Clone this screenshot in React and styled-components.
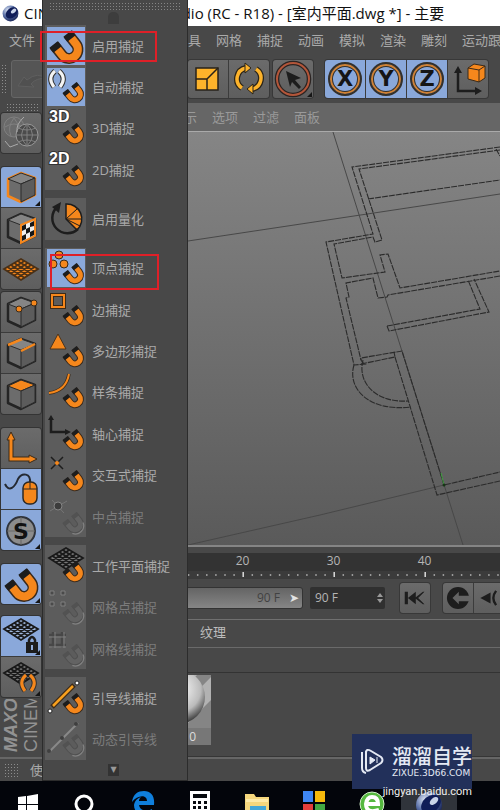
import React from "react";
import styled, { createGlobalStyle } from "styled-components";

const ORANGE = "#f5871c";
const INK = "#1d1d1d";

/* ---------- icons ---------- */

const Magnet = ({ small, off }) => (
  <g transform={small ? "translate(14 12) scale(.63)" : undefined} fill="none" opacity={off ? 0.6 : 1}>
    <path d="M7 18L15 28A8.9 8.9 0 0 0 29 17L21 7" stroke={off ? "#484848" : "#3a2a1c"} strokeWidth="11" />
    <path d="M8 19L15 28A8.9 8.9 0 0 0 29 17L22 8" stroke={off ? "#686868" : ORANGE} strokeWidth="8" />
    <path d="M6.500 17.500L10.500 22.500M20.500 6.500L24.500 11.500" stroke={off ? "#4c4c4c" : INK} strokeWidth="10.500" />
    {off && <path d="M18 37A13 13 0 0 0 35 20" stroke="#9a9a9a" strokeWidth="2" />}
  </g>
);

const Grid = ({ x = 3, y = 0, color = "#191919", fill = "#777" }) => (
  <g transform={`translate(${x} ${y})`} stroke={color} strokeWidth="1.800" fill={fill}>
    <path d="M0 11L17 1L34 11L17 22Z" />
    <path
      fill="none"
      d="M3.400 9L20.400 19.800M6.800 7L23.800 17.600M10.200 5L27.200 15.400M13.600 3L30.600 13.200M3.400 13.200L20.400 3M6.800 15.400L23.800 5M10.200 17.600L27.200 7M13.600 19.800L30.600 9"
    />
  </g>
);

const Cube = ({ edge = "#242424", top = "#858585", children }) => (
  <>
    <path d="M6 11L19 5L33 10V27L19 34L6 28Z" fill="#6c6c6c" stroke={edge} strokeWidth="2.500" strokeLinejoin="round" />
    <path d="M6 11L19 5L33 10L19 16Z" fill={top} stroke="#2b2b2b" />
    <path d="M19 16L33 10V27L19 34Z" fill="#5c5c5c" stroke="#2b2b2b" />
    {children}
  </>
);

const Brackets = ({ x = 0, y = 0, color = "#f4f4f4" }) => (
  <g transform={`translate(${x} ${y})`} fill="none">
    <path d="M8 2Q0 9 7 18M12 2Q20 9 13 18" stroke="#333" strokeWidth="5" />
    <path d="M8 2Q0 9 7 18M12 2Q20 9 13 18" stroke={color} strokeWidth="3" />
  </g>
);

const ModeText = ({ children }) => (
  <text x="2" y="13" fontSize="16" fontWeight="700" fill="#fff" stroke="#333" strokeWidth="2" paintOrder="stroke" fontFamily="Liberation Sans, Arial, sans-serif">
    {children}
  </text>
);

const glyphs = {
  enable: <Magnet />,
  auto: <><Brackets y={1} /><Magnet small /></>,
  three: <><ModeText>3D</ModeText><Magnet small /></>,
  two: <><ModeText>2D</ModeText><Magnet small /></>,
  quantize: (
    <>
      <path d="M19 19V4A15 15 0 0 1 30 30Z" fill={ORANGE} stroke={INK} strokeWidth="1.500" />
      <path d="M19 19L30 9M19 19H34M19 19L33 26" stroke={INK} />
      <path d="M10 7A15 15 0 1 0 31 29" fill="none" stroke={INK} strokeWidth="2.500" />
      <path d="M5 7L14 2L12 13Z" fill={INK} />
    </>
  ),
  vertex: (
    <>
      <g fill={ORANGE} stroke="#3b2a18">
        <circle cx="12" cy="6" r="4" /><circle cx="6" cy="15" r="4" /><circle cx="17" cy="15" r="4" />
      </g>
      <Magnet small />
    </>
  ),
  edge: (
    <>
      <path d="M5 4H17V16H5Z" fill="none" stroke="#3b2a18" strokeWidth="4" />
      <path d="M5 4H17V16H5Z" fill="none" stroke={ORANGE} strokeWidth="2" />
      <Magnet small />
    </>
  ),
  polygon: <><path d="M11 2L19 17H3Z" fill={ORANGE} stroke="#4b341d" /><Magnet small /></>,
  spline: (
    <>
      <path d="M2 20Q19 18 22 1" fill="none" stroke="#3b2a18" strokeWidth="3.500" />
      <path d="M2 20Q19 18 22 1" fill="none" stroke={ORANGE} strokeWidth="2" />
      <Magnet small />
    </>
  ),
  axis: <><path d="M4 4V17H20" fill="none" stroke={INK} strokeWidth="2.500" /><path d="M1 5L4 0L7 5ZM18 14L24 17L18 20Z" fill={INK} /><Magnet small /></>,
  cross: <><path d="M4 1L16 13M16 1L4 13" stroke={INK} strokeWidth="1.500" /><circle cx="10" cy="7" r="2" fill={ORANGE} /><Magnet small /></>,
  middle: (
    <>
      <path d="M3 13L20 3M5 2L17 15" stroke="#757575" />
      <circle cx="11" cy="8" r="4" fill="#3c3c3c" stroke="#858585" />
      <Magnet small off />
    </>
  ),
  plane: <><Grid x={2} y={0} /><Magnet small /></>,
  gridPoint: (
    <>
      <path d="M3 3h4v4H3zM14 3h4v4h-4zM3 14h4v4H3zM14 14h4v4h-4z" fill="#4a4a4a" stroke="#7e7e7e" />
      <Magnet small off />
    </>
  ),
  gridLine: (
    <>
      <path d="M6 2V18M15 2V18M2 5H19M2 15H19" stroke="#474747" strokeWidth="2.500" />
      <path d="M8 2V18M17 2V18M2 7H19M2 17H19" stroke="#7e7e7e" />
      <Magnet small off />
    </>
  ),
  guide: (
    <>
      <path d="M5 28L27 6" stroke="#3b2a18" strokeWidth="5" />
      <path d="M6 27L26 7" stroke="#f7a01f" strokeWidth="2.500" />
      <g fill="#fff" stroke="#222"><circle cx="3" cy="32" r="2" /><circle cx="30" cy="4" r="2" /></g>
      <Magnet small />
    </>
  ),
  dynamic: (
    <>
      <path d="M2 32L31 3" stroke="#898989" strokeWidth="2" />
      <g fill="#3f3f3f"><circle cx="2" cy="31" r="2" /><circle cx="15" cy="18" r="2" /><circle cx="29" cy="4" r="2" /></g>
      <Magnet small off />
    </>
  ),
  globe: (
    <g fill="none" stroke="#808080">
      <circle cx="12" cy="13" r="10" fill="#6a6a6a" />
      <path d="M3 13Q12 7 21 13M12 4Q5 13 9 22M12 4Q19 13 16 22" />
      <circle cx="25" cy="21" r="11" fill="#4b4b4b" stroke="#999" />
      <path d="M14 21H36M16 14Q25 18 34 14M16 28Q25 24 34 28M25 10V32M25 10Q14 21 25 32M25 10Q36 21 25 32" />
      <path d="M3 27L8 33L16 30M22 3Q14 10 15 18" stroke="#aaa" />
    </g>
  ),
  model: <Cube edge={ORANGE} />,
  texture: (
    <Cube>
      <path d="M19 16L33 10V27L19 34Z" fill="#eee" stroke={ORANGE} strokeWidth="2" />
      <path d="M20 17l4-2v5l-4 2zM28 14l4-2v5l-4 1zM24 20l4-2v5l-4 2zM20 27l4-2v5l-4 2zM28 23l4-2v5l-4 2z" fill="#151515" />
    </Cube>
  ),
  workplane: <Grid x={2} y={8} color="#4a3016" fill={ORANGE} />,
  points: <Cube><g fill={ORANGE} stroke="#3b2a18"><circle cx="17" cy="16" r="3" /><circle cx="32" cy="10" r="3" /></g></Cube>,
  edges: <Cube><path d="M6 11L20 5M19 17L33 10" stroke={ORANGE} strokeWidth="2.500" /></Cube>,
  polys: <Cube top={ORANGE} />,
  axisMode: (
    <>
      <path d="M9 8V30H29" fill="none" stroke="#3b2a18" strokeWidth="5" />
      <path d="M5 11L9 3L13 11ZM27 26L35 30L27 34Z" fill={ORANGE} stroke="#3b2a18" />
      <path d="M9 8V30H29" fill="none" stroke={ORANGE} strokeWidth="3" />
    </>
  ),
  mouse: (
    <>
      <path d="M3 14C7 23 13 17 16 9C20 2 29 3 28 13" fill="none" stroke="#252a33" strokeWidth="2" />
      <rect x="21" y="12" width="14" height="22" rx="6" fill={ORANGE} stroke="#2c2925" strokeWidth="1.500" />
      <path d="M21 19H35M28 12V19" stroke="#2c2925" />
    </>
  ),
  solo: (
    <>
      <circle cx="19" cy="20" r="14" fill="#8c8c8c" stroke="#30343b" strokeWidth="2" />
      <path d="M5 20H33M19 6V34" stroke="#666" />
      <text x="19" y="28" textAnchor="middle" fontSize="22" fontWeight="700" fontFamily="DejaVu Sans, sans-serif" fill="#111">S</text>
    </>
  ),
  lock: (
    <>
      <Grid x={2} y={1} fill="#9db4d9" />
      <path d="M27 26V23Q30 17 33 23V26" fill="none" stroke={INK} strokeWidth="2.500" />
      <rect x="24" y="25" width="12" height="11" fill={INK} />
      <path d="M30 28V33" stroke="#93aedc" strokeWidth="2" />
    </>
  ),
  gridAuto: <><Grid x={2} y={4} /><Brackets x={16} y={15} color={ORANGE} /></>,
  scale: (
    <>
      <path d="M7 8H29V30H7Z" fill="#fdb32b" stroke="#27221a" strokeWidth="1.500" />
      <path d="M7 19H18V30M18 19L29 8" fill="none" stroke="#27221a" strokeWidth="1.500" />
    </>
  ),
  rotate: (
    <g fill="none">
      <path d="M12 28A11 11 0 0 1 16 8M26 9A11 11 0 0 1 22 29" stroke="#2b2418" strokeWidth="6" />
      <path d="M12 28A11 11 0 0 1 16 8M26 9A11 11 0 0 1 22 29" stroke="#fdb32b" strokeWidth="3.500" />
      <path d="M15 3L21 8L15 13ZM23 24L17 29L23 34Z" fill="#fdb32b" stroke="#2b2418" />
    </g>
  ),
  select: (
    <>
      <circle cx="19" cy="19" r="16" fill="none" stroke="#2c2422" strokeWidth="4.500" />
      <circle cx="19" cy="19" r="16" fill="none" stroke="#b3563a" strokeWidth="2" />
      <path d="M12 11L27 18L21 20L27 27L25 29L18 22L16 27Z" fill={INK} />
    </>
  ),
  coord: (
    <>
      <path d="M9 12V31H27" fill="none" stroke={INK} strokeWidth="2.500" />
      <path d="M5 13L9 6L13 13ZM26 27L33 31L26 35Z" fill={INK} />
      <path d="M19 8L25 4L36 6V18L30 22L19 19Z" fill={ORANGE} stroke="#3b2a18" />
      <path d="M19 8L30 10V22M30 10L36 6" fill="none" stroke="#3b2a18" />
    </>
  ),
  undo: <path d="M6 25L12 16L15 19Q26 10 34 18Q25 16 19 23L22 26Z" fill="#505050" stroke="#5f5f5f" />,
  toStart: <path d="M6 11H10V27H6ZM10 19L20 11V18L29 11H31L23 19L31 27H29L20 20V27Z" fill={INK} />,
  record: (
    <>
      <circle cx="19" cy="19" r="14" fill={INK} />
      <path d="M12 19L20 11V16H35V23H20V27Z" fill="#646464" />
    </>
  ),
  back: <><path d="M8 19L21 12V26Z" fill={INK} /><path d="M28 10Q21 19 28 28" fill="none" stroke={INK} strokeWidth="3" /></>,
};

const Glyph = ({ name, size = 38 }) => (
  <svg width={size} height={size} viewBox="0 0 38 38" aria-hidden="true">
    {glyphs[name]}
  </svg>
);

const CinemaLogo = ({ size }) => (
  <svg width={size} height={size} viewBox="0 0 28 28" aria-hidden="true">
    <defs>
      <radialGradient id="ball" cx=".35" cy=".3" r=".8">
        <stop offset="0" stopColor="#dfe7f5" />
        <stop offset=".5" stopColor="#5a70a8" />
        <stop offset="1" stopColor="#0c1748" />
      </radialGradient>
    </defs>
    <circle cx="14" cy="14" r="13" fill="url(#ball)" />
    <ellipse cx="16" cy="13" rx="11" ry="8" transform="rotate(-40 16 13)" fill="#101d58" />
    <ellipse cx="19" cy="10" rx="5" ry="3" transform="rotate(-40 19 10)" fill="#c9d4ea" />
  </svg>
);

/* ---------- data ---------- */

const menus = ["工具", "网格", "捕捉", "动画", "模拟", "渲染", "雕刻", "运动跟踪"];
const tabs = ["显示", "选项", "过滤", "面板"];

const snapGroups = [
  [
    { icon: "enable", label: "启用捕捉", active: true },
    { icon: "auto", label: "自动捕捉", active: true },
    { icon: "three", label: "3D捕捉" },
    { icon: "two", label: "2D捕捉" },
  ],
  [{ icon: "quantize", label: "启用量化" }],
  [
    { icon: "vertex", label: "顶点捕捉", active: true },
    { icon: "edge", label: "边捕捉" },
    { icon: "polygon", label: "多边形捕捉" },
    { icon: "spline", label: "样条捕捉" },
    { icon: "axis", label: "轴心捕捉" },
    { icon: "cross", label: "交互式捕捉" },
    { icon: "middle", label: "中点捕捉", disabled: true },
  ],
  [
    { icon: "plane", label: "工作平面捕捉" },
    { icon: "gridPoint", label: "网格点捕捉", disabled: true },
    { icon: "gridLine", label: "网格线捕捉", disabled: true },
  ],
  [
    { icon: "guide", label: "引导线捕捉" },
    { icon: "dynamic", label: "动态引导线", disabled: true },
  ],
];

const railGroups = [
  { gap: 14, items: [{ icon: "globe" }] },
  { gap: 3, items: [{ icon: "model", active: true, more: true }, { icon: "texture" }, { icon: "workplane" }] },
  { gap: 14, items: [{ icon: "points" }, { icon: "edges" }, { icon: "polys" }] },
  { gap: 14, items: [{ icon: "axisMode" }, { icon: "mouse", active: true }, { icon: "solo", active: true, more: true }] },
  { gap: 12, items: [{ icon: "enable", active: true, more: true }] },
  { gap: 0, items: [{ icon: "lock", active: true, more: true }, { icon: "gridAuto", more: true }] },
];

/* ---------- app ---------- */

const App = () => {
  return (
    <Screen>
      <GlobalStyle />
      <TitleBar>
        <CinemaLogo size={17} />
        <TitleText>CINEMA 4D R18.02 Studio (RC - R18) - [室内平面.dwg *] - 主要</TitleText>
      </TitleBar>

      <MenuBar>
        <MenuButton>文件</MenuButton>
        <MenuList>
          {menus.map((m) => (
            <MenuButton key={m}>{m}</MenuButton>
          ))}
        </MenuList>
      </MenuBar>

      <Toolbar>
        <Grip $vertical />
        <UndoButton aria-label="undo"><Glyph name="undo" /></UndoButton>
        <ToolGroup>
          <ToolButton aria-label="scale"><Glyph name="scale" /></ToolButton>
          <ToolButton aria-label="rotate"><Glyph name="rotate" /></ToolButton>
        </ToolGroup>
        <ToolGroup>
          <ToolButton $more aria-label="select"><Glyph name="select" /></ToolButton>
        </ToolGroup>
        <AxisGroup>
          {["X", "Y", "Z"].map((a) => (
            <ToolButton key={a} $active>
              <AxisRing>{a}</AxisRing>
            </ToolButton>
          ))}
          <ToolButton aria-label="coordinates"><Glyph name="coord" /></ToolButton>
        </AxisGroup>
      </Toolbar>

      <Body>
        <Rail>
          <Grip />
          {railGroups.map((group, i) => (
            <RailGroup key={i} $gap={group.gap}>
              {group.items.map((item) => (
                <RailButton key={item.icon} $active={item.active} $more={item.more} aria-label={item.icon}>
                  <Glyph name={item.icon} />
                </RailButton>
              ))}
            </RailGroup>
          ))}
          <Brand>
            <b>MAXON</b>
            <span>CINEMA 4D</span>
          </Brand>
        </Rail>

        <Main>
          <TabBar>
            {tabs.map((t) => (
              <TabButton key={t}>{t}</TabButton>
            ))}
          </TabBar>
          <Viewport>
            <FloorPlan />
          </Viewport>
          <Timeline>
            <Frames>
              <span>20</span>
              <span>30</span>
              <span>40</span>
            </Frames>
            <Ticks />
          </Timeline>
          <Transport>
            <RangeBar>
              90 F <RangeEnd aria-label="range end">➤</RangeEnd>
            </RangeBar>
            <FrameField>
              <input aria-label="frame" defaultValue="90 F" />
              <svg width="6" height="12" viewBox="0 0 6 12"><path d="M0 5L3 1L6 5ZM0 7L3 11L6 7Z" fill="#999" /></svg>
            </FrameField>
            <PlayGroup>
              <PlayButton aria-label="to start"><Glyph name="toStart" size={30} /></PlayButton>
            </PlayGroup>
            <PlayGroup>
              <PlayButton aria-label="record"><Glyph name="record" size={30} /></PlayButton>
              <PlayButton aria-label="back"><Glyph name="back" size={30} /></PlayButton>
            </PlayGroup>
          </Transport>
          <MaterialBar>
            <TabButton $bright>纹理</TabButton>
          </MaterialBar>
          <MaterialStrip />
          <Materials>
            <Material>
              <svg width="70" height="53" viewBox="0 0 70 53" aria-hidden="true">
                <defs>
                  <radialGradient id="mat" cx=".5" cy=".35" r=".65">
                    <stop offset="0" stopColor="#fff" />
                    <stop offset=".65" stopColor="#bbb" />
                    <stop offset="1" stopColor="#333" />
                  </radialGradient>
                </defs>
                <path d="M0 0H70V53H0Z" fill="#858585" />
                <path d="M70 2L20 53H42L70 25ZM56 0H40L0 42V53H4Z" fill="#b2b2b2" />
                <circle cx="37" cy="22" r="27" fill="url(#mat)" />
              </svg>
              <MaterialName>0</MaterialName>
            </Material>
          </Materials>
        </Main>
      </Body>

      <StatusBar>
        <Grip $small />
        <span>使</span>
      </StatusBar>

      <Taskbar>
        <TaskList>
          <TaskButton aria-label="start">
            <svg width="20" height="22" viewBox="0 0 20 22"><path d="M0 6L8 5V13H0ZM9 5L20 3V13H9ZM0 14H8V22H0ZM9 14H20V22H9Z" fill="#fff" /></svg>
          </TaskButton>
          <TaskButton aria-label="search">
            <svg width="22" height="22" viewBox="0 0 22 22"><circle cx="10" cy="13" r="8" fill="none" stroke="#fff" strokeWidth="3" /></svg>
          </TaskButton>
          <TaskButton aria-label="edge">
            <svg width="24" height="24" viewBox="0 0 24 24"><path d="M1 11C2 3 7 0 13 0C20 0 24 5 23 14H8C9 20 16 21 21 18V22C12 26 3 23 3 14C4 9 7 7 10 6C8 8 8 9 8 10H16C16 3 6 4 1 11Z" fill="#0f7fdc" /></svg>
          </TaskButton>
          <TaskButton aria-label="calculator">
            <svg width="20" height="26" viewBox="0 0 20 26">
              <path d="M0 0H20V26H0Z" fill="#fff" />
              <path d="M3 3H17V7H3ZM3 10h3v3H3zM8 10h3v3H8zM14 10h3v3h-3zM3 15h3v3H3zM8 15h3v3H8zM14 15h3v3h-3z" fill="#07090e" />
            </svg>
          </TaskButton>
          <TaskButton aria-label="files">
            <svg width="26" height="24" viewBox="0 0 26 24"><path d="M1 3H10L12 6H25V24H1Z" fill="#f5d77d" /><path d="M6 15H22V24H6Z" fill="#44a7d8" /><path d="M2 8H24V11H2Z" fill="#fdeaa8" /></svg>
          </TaskButton>
          <TaskButton aria-label="store">
            <svg width="22" height="24" viewBox="0 0 22 24"><path d="M0 0H10V11H0Z" fill="#3e86f4" /><path d="M12 0H22V11H12Z" fill="#f6b90c" /><path d="M0 13H10V24H0Z" fill="#e43e3b" /><path d="M12 13H22V24H12Z" fill="#43a843" /></svg>
          </TaskButton>
          <TaskButton aria-label="browser">
            <svg width="26" height="26" viewBox="0 0 26 26">
              <circle cx="13" cy="13" r="12" fill="#55b83f" stroke="#d4efcc" strokeWidth="1" />
              <path d="M20 19Q7 23 7 13Q8 6 13 6Q19 6 19 13H9" fill="none" stroke="#fff" strokeWidth="4" />
            </svg>
          </TaskButton>
          <TaskButton $current aria-label="cinema">
            <CinemaLogo size={28} />
          </TaskButton>
        </TaskList>
      </Taskbar>

      <SnapMenu role="menu">
        <SnapGrip />
        <ScrollUp aria-label="up" />
        {snapGroups.map((group, i) => (
          <SnapGroup key={i} $rows={group.length}>
            {group.map((item) => (
              <SnapItem key={item.label} role="menuitem" disabled={item.disabled}>
                <SnapIcon>
                  <SnapTile $active={item.active}><Glyph name={item.icon} /></SnapTile>
                </SnapIcon>
                {item.label}
              </SnapItem>
            ))}
          </SnapGroup>
        ))}
        <ScrollDown aria-label="down">▼</ScrollDown>
        <Mark $x={-3} $y={31} $w={117} $h={31} />
        <Mark $x={7} $y={254} $w={109} $h={36} />
      </SnapMenu>

      <Watermark>
        <svg width="24" height="26" viewBox="0 0 24 26" fill="none" stroke="#e4e9f4" strokeWidth="2">
          <path d="M6 3V20Q6 24 10 22L21 15Q24 12 21 9L11 3Q6 0 6 5M2 4V20Q2 24 6 25" />
          <path d="M10 9L15 12L10 16ZM17 9V15" fill="#e4e9f4" strokeWidth="1" />
        </svg>
        <div>
          <strong>溜溜自学</strong>
          <small>ZIXUE.3D66.COM</small>
        </div>
      </Watermark>
      <SiteName href="#">jingyan.baidu.com</SiteName>
    </Screen>
  );
};

const FloorPlan = () => (
  <svg viewBox="42 132 458 413" preserveAspectRatio="xMaxYMin slice" aria-hidden="true">
    <g fill="none" stroke="#484848" strokeWidth="1">
      <path d="M333 132L463 545M188 241L500 194M188 545L320 515L444 485" />
    </g>
    <g fill="none" stroke="#2b2b2b" strokeWidth="1.100" strokeDasharray="6 1">
      <path d="M500 147L352 167L373 234L326 242L354 365L365 364Q360 361 361 358L402 351L444 485L500 472" />
      <path d="M500 150L359 169L382 240L375 242L373 237L334 244L342 278L385 272L380 255L388 254L400 288L500 271" />
      <path d="M368 199L500 180M496 149L500 156" />
      <path d="M500 276L388 295L387 297L378 298L373 278L346 283L349 297L346 298L361 360M361 364L395 357L394 352" />
      <path d="M387 326L480 309L468 280M387 326L389 331L489 312L474 279" />
      <path d="M395 357L437 495L500 481" />
      <path d="M354 365C347 388 368 412 411 407M363 360C357 383 376 403 408 401" />
    </g>
    <path d="M444 485L441 473" stroke="#3fa13f" />
    <circle cx="444" cy="485" r="1.500" fill="#163516" />
  </svg>
);

const Ticks = () => (
  <TickArea viewBox="0 0 458 8" preserveAspectRatio="xMinYMin slice" aria-hidden="true">
    {Array.from({ length: 51 }, (_, i) => {
      const major = i % 10 === 2;
      return <path key={i} d={`M${i * 9.1 + 1} ${major ? 1 : 3}V${major ? 6 : 5}`} stroke={major ? "#ddd" : "#999"} strokeWidth="1.500" />;
    })}
  </TickArea>
);

const GlobalStyle = createGlobalStyle`
  * { box-sizing: border-box; }

  body {
    margin: 0;
    background: #484848;
  }

  button, input {
    font: inherit;
    color: inherit;
    border: 0;
    padding: 0;
    background: none;
  }

  svg {
    display: block;
    flex-shrink: 0;
  }
`;

const Screen = styled.div`
  position: relative;
  display: flex;
  flex-direction: column;
  height: 100vh;
  min-height: 780px;
  overflow: hidden;
  background: #484848;
  color: #aaa;
  font: 13px/20px "Open Sans", "Noto Sans CJK SC", sans-serif;
`;

const TitleBar = styled.header`
  display: flex;
  align-items: center;
  gap: 5px;
  height: 26px;
  padding-left: 2px;
  flex-shrink: 0;
  background: #fff;
  color: #111;
`;

const TitleText = styled.span`
  font-size: 15px;
  white-space: nowrap;
`;

const MenuBar = styled.nav`
  display: grid;
  grid-template-columns: 166px 1fr;
  align-items: center;
  height: 28px;
  margin-bottom: 2px;
  padding-left: 9px;
  flex-shrink: 0;
  overflow: hidden;
`;

const MenuList = styled.div`
  display: flex;
  gap: 15px;
`;

const MenuButton = styled.button`
  white-space: nowrap;
  justify-self: start;
`;

const Toolbar = styled.div`
  display: flex;
  align-items: center;
  gap: 4px;
  height: 47px;
  flex-shrink: 0;
  padding: 0 0 2px 1px;
`;

const Grip = styled.div`
  width: ${(p) => (p.$vertical ? "6px" : p.$small ? "15px" : "32px")};
  height: ${(p) => (p.$vertical ? "30px" : p.$small ? "15px" : "8px")};
  flex-shrink: 0;
  background: radial-gradient(circle, #8c8c8c 1px, transparent 1px) 0 0 / 3px 3px;
`;

const ToolGroup = styled.div`
  display: flex;
  gap: 1px;
  border-radius: 3px;
  overflow: hidden;
  background: #3c3c3c;
  box-shadow: 0 0 0 1px #383838;
`;

const AxisGroup = styled(ToolGroup)`
  margin-left: 8px;
`;

const ToolButton = styled.button`
  position: relative;
  display: grid;
  place-items: center;
  width: 40px;
  height: 38px;
  background: ${(p) => (p.$active ? "#8aa8da" : "linear-gradient(#6b6b6b, #5e5e5e)")};

  &::after {
    content: "";
    display: ${(p) => (p.$more ? "block" : "none")};
    position: absolute;
    right: 1px;
    bottom: 1px;
    border-left: 5px solid transparent;
    border-bottom: 5px solid #161616;
  }
`;

const UndoButton = styled(ToolButton)`
  width: 173px;
  justify-items: start;
  border: 1px solid #666;
  border-radius: 3px;
  background: #555;
`;

const AxisRing = styled.span`
  display: grid;
  place-items: center;
  width: 34px;
  height: 34px;
  border: 2px solid #33302c;
  border-radius: 50%;
  box-shadow: inset 0 0 0 2px #cf8237, inset 0 0 0 3px #33302c;
  color: #151515;
  font: 700 21px/30px "DejaVu Sans", sans-serif;
`;

const Body = styled.div`
  display: flex;
  flex: 1;
  min-height: 0;
`;

const Rail = styled.aside`
  display: flex;
  flex-direction: column;
  width: 42px;
  flex-shrink: 0;
  padding-left: 1px;

  > ${Grip} {
    margin: 0 0 2px 5px;
  }
`;

const RailGroup = styled.div`
  display: flex;
  flex-direction: column;
  gap: 1px;
  width: 40px;
  margin-bottom: ${(p) => p.$gap}px;
  border-radius: 3px;
  overflow: hidden;
  flex-shrink: 0;
  background: #3b3b3b;
  box-shadow: 0 0 0 1px #343434;
`;

const RailButton = styled(ToolButton)`
  width: 40px;
  height: 40px;
`;

const Brand = styled.div`
  flex: 1;
  min-height: 0;
  margin: 2px 0 5px;
  overflow: hidden;
  writing-mode: vertical-rl;
  transform: rotate(180deg);
  color: #929292;
  white-space: nowrap;
  font: 18px/20px "Liberation Sans", Arial, sans-serif;

  b, span {
    display: block;
  }

  /* the block is turned upside down, so the first line sits on the left */
  b {
    font-style: italic;
  }
`;

const Main = styled.main`
  display: flex;
  flex-direction: column;
  flex: 1;
  min-width: 0;
`;

const TabBar = styled.div`
  display: flex;
  align-items: center;
  gap: 15px;
  height: 28px;
  flex-shrink: 0;
  padding-left: 129px;
  background: #666;
`;

const TabButton = styled.button`
  color: ${(p) => (p.$bright ? "#bdbdbd" : "#9a9a9a")};
`;

const Viewport = styled.section`
  flex: 1;
  min-height: 0;
  border-top: 1px solid #aaa;
  border-bottom: 2px solid #858585;
  background: linear-gradient(#858585, #5a5a5a);

  svg {
    width: 100%;
    height: 100%;
  }
`;

const Timeline = styled.div`
  flex-shrink: 0;
  height: 32px;
  padding-top: 6px;
`;

const Frames = styled.div`
  display: grid;
  grid-template-columns: repeat(3, 91px);
  height: 18px;
  padding-left: 155px;
  background: #333;
  color: #b5b5b5;
  font-size: 12px;
  line-height: 16px;
  text-align: center;
`;

const TickArea = styled.svg`
  width: 100%;
  height: 8px;
  background: #3b3b3b;
`;

const Transport = styled.div`
  display: flex;
  align-items: center;
  height: 41px;
  flex-shrink: 0;
  padding-bottom: 2px;
  overflow: hidden;
  border-bottom: 1px solid #707070;
  font-size: 12px;
`;

const RangeBar = styled.div`
  display: flex;
  align-items: center;
  justify-content: flex-end;
  gap: 6px;
  width: 261px;
  height: 22px;
  margin-right: 7px;
  flex-shrink: 0;
  border: 1px solid #333;
  border-radius: 3px;
  background: linear-gradient(#646464, #868686);
  color: #424242;
`;

const RangeEnd = styled.button`
  width: 16px;
  color: #e3e3e3;
  font: 12px/20px "DejaVu Sans", sans-serif;
`;

const FrameField = styled.label`
  display: flex;
  align-items: center;
  width: 75px;
  height: 22px;
  padding: 0 2px 0 5px;
  margin-right: 2px;
  flex-shrink: 0;
  border-radius: 2px;
  background: #303030;
  color: #b5b5b5;

  input {
    flex: 1;
    min-width: 0;
  }
`;

const PlayGroup = styled(ToolGroup)`
  margin-left: 13px;
  flex-shrink: 0;
`;

const PlayButton = styled(ToolButton)`
  width: 30px;
  height: 30px;
`;

const MaterialBar = styled.div`
  display: flex;
  align-items: center;
  height: 28px;
  flex-shrink: 0;
  padding: 0 0 3px 158px;
  border-bottom: 1px solid #6a6a6a;
`;

const MaterialStrip = styled.div`
  height: 25px;
  flex-shrink: 0;
  border-bottom: 1px solid #333;
`;

const Materials = styled.div`
  height: 84px;
  padding: 2px 0 0 99px;
  flex-shrink: 0;
  border-bottom: 1px solid #363636;
`;

const Material = styled.figure`
  width: 70px;
  margin: 0;
  background: #777;
`;

const MaterialName = styled.figcaption`
  height: 17px;
  padding-right: 15px;
  color: #ddd;
  font-size: 12px;
  line-height: 17px;
  text-align: right;
`;

const StatusBar = styled.footer`
  display: flex;
  align-items: center;
  gap: 11px;
  height: 24px;
  padding-left: 4px;
  flex-shrink: 0;
  border-top: 2px solid #666;
`;

const Taskbar = styled.nav`
  height: 29px;
  flex-shrink: 0;
  overflow: hidden;
  background: #03050b;
`;

const TaskList = styled.div`
  display: flex;
  justify-content: space-between;
  max-width: 457px;
`;

const TaskButton = styled.button`
  display: flex;
  justify-content: center;
  width: 56px;
  height: 40px;
  padding-top: 10px;
  background: ${(p) => (p.$current ? "#30343b" : "transparent")};
`;

const SnapMenu = styled.div`
  position: absolute;
  top: 0;
  bottom: 29px;
  left: 42px;
  display: flex;
  flex-direction: column;
  width: 146px;
  padding: 0 5px 0 2px;
  border: 1px solid #2c2c2c;
  border-top: 0;
  background: #484848;
`;

const SnapGrip = styled.div`
  height: 8px;
  margin: 2px 0 2px 4px;
  flex-shrink: 0;
  background: radial-gradient(circle, #858585 1px, transparent 1px) 0 0 / 3px 3px;
`;

const ScrollUp = styled.button`
  width: 11px;
  height: 12px;
  margin: 0 auto 1px;
  flex-shrink: 0;
  border-radius: 5px 5px 0 0;
  background: #3d3d3d;
`;

const SnapGroup = styled.div`
  display: grid;
  grid-auto-rows: 1fr;
  flex: ${(p) => p.$rows} 1 0;
  min-height: 0;

  & + & {
    margin-top: 8px;
    position: relative;
  }

  & + &::before {
    content: "";
    position: absolute;
    top: -5px;
    left: 0;
    right: 0;
    border-top: 1px solid #303030;
    border-bottom: 1px solid #505050;
  }
`;

const SnapItem = styled.button`
  display: flex;
  align-items: center;
  gap: 6px;
  min-height: 0;
  color: #aaa;
  white-space: nowrap;

  &:disabled {
    color: #7c7c7c;
  }
`;

const SnapIcon = styled.span`
  display: grid;
  place-items: center;
  align-self: stretch;
  width: 41px;
  flex-shrink: 0;
  background: #5c5c5c;
`;

const SnapTile = styled.span`
  background: ${(p) => (p.$active ? "#8aa8da" : "transparent")};
`;

const ScrollDown = styled.button`
  width: 11px;
  height: 12px;
  margin: 4px auto;
  flex-shrink: 0;
  background: #333;
  color: #999;
  font: 8px/12px "DejaVu Sans", sans-serif;
`;

const Mark = styled.div`
  position: absolute;
  left: ${(p) => p.$x}px;
  top: ${(p) => p.$y}px;
  width: ${(p) => p.$w}px;
  height: ${(p) => p.$h}px;
  border: 2px solid #df2028;
  pointer-events: none;
`;

const Watermark = styled.div`
  position: absolute;
  right: 28px;
  bottom: 21px;
  display: flex;
  align-items: center;
  gap: 8px;
  width: 120px;
  height: 55px;
  padding: 0 0 2px 8px;
  background: #22305a;
  color: #e4e9f4;

  strong {
    display: block;
    font: 500 20px/24px "Noto Sans CJK SC", sans-serif;
  }

  small {
    display: block;
    font: 9px/10px "DejaVu Sans", sans-serif;
  }
`;

const SiteName = styled.a`
  position: absolute;
  right: 28px;
  bottom: 8px;
  color: #f0f0f0;
  font-family: Roboto, sans-serif;
  font-size: 11px;
  text-decoration: none;
`;

export default App;
